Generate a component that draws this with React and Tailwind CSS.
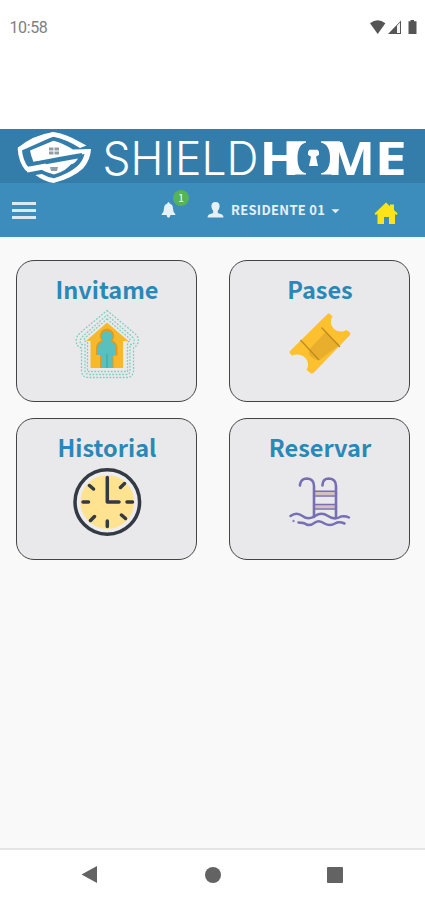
import React from "react";

function StatusBar() {
  return (
    <div className="flex h-[129px] items-start justify-between bg-white pl-[9.500px] pr-[5px] pt-[18px]">
      <span className="font-['Roboto',sans-serif] text-[16px] leading-[20px] tracking-[-0.4px] text-[#808080]">10:58</span>
      <svg className="h-[20px] w-[52px]" viewBox="368 18 52 20" fill="#555555">
        <path d="M370 23.300Q377.700 17.400 385.400 23.300L377.700 34Z" />
        <path d="M388 34L401 20.500V34Z" />
        <path d="M397 25.600L400 22.500V33H397Z" fill="#f5f5f5" />
        <path d="M410.500 20h3.500v1.300h2.500V34h-8V21.300h2Z" />
      </svg>
    </div>
  );
}

function Logo() {
  return (
    <div className="h-[54px] bg-[#347dab]">
      <svg className="block h-[54px] w-[425px] overflow-visible" viewBox="0 129 425 54" fill="#ffffff">
        <path d="M53.500 134L19.800 149Q20.500 161 27 169L46 165.500" fill="none" stroke="#ffffff" strokeWidth="4.200" strokeLinejoin="round" />
        <path d="M53.500 132Q66 134 78 141L86.500 145.500L80 148Q67 139.500 53.500 136.700Q36 140.500 22.500 149.500L17.500 148Q33 135 53.500 132Z" />
        <path d="M30 150.500L53.500 140.700Q64 143.500 73 149.500L91 149Q90.500 160 83 168.500Q72 178.500 53.500 183Q44 181.500 35.500 175L42 174Q48 177.500 54 178.300Q68 174 77 166.500Q83 161 84.500 154L33.500 162Q31 156 30 150.500Z" />
        <path d="M25 168L78 158.500Q75 164 70 164.500L27.500 172.500Z" />
        <path d="M40 169L73 161.500Q67 171 54 174.500Q47 173 40 169Z" />
        <path d="M29 164.300L62 158Q72 156 82 154.500" fill="none" stroke="#347dab" strokeWidth="3.200" />
        <path d="M49 147.500h4.500v3H49zm5.500 0H59v3h-4.500zM49 151.500h4.500v3H49zm5.500 0H59v3h-4.500zM50 167h8L57 171h-6Z" fill="#929da5" />
        <text x="102.500" y="174.500" fontFamily="Inter, sans-serif" fontWeight="300" fontSize="46" textLength="156" lengthAdjust="spacingAndGlyphs">SHIELD</text>
        <text x="259.500" y="174.500" fontFamily="Open Sans, sans-serif" fontWeight="700" fontSize="46" textLength="40.500" lengthAdjust="spacingAndGlyphs">H</text>
        <path d="M286.500 141.200H306V142.500Q297.500 144.500 297.500 158Q297.500 171.500 306 173.300V174.500H286.500Z" />
        <path d="M340 141.200H321V142.500Q330 144.500 330 158Q330 171.500 321 173.300V174.500H338Z" />
        <path d="M309.500 149.700h8l1.500 2v3l-3 2L318 166h-9l2-9.300l-3-2v-3Z" />
        <text x="327" y="174.500" fontFamily="Open Sans, sans-serif" fontWeight="700" fontSize="46" textLength="48" lengthAdjust="spacingAndGlyphs">M</text>
        <text x="374.500" y="174.500" fontFamily="Open Sans, sans-serif" fontWeight="700" fontSize="46" textLength="32.500" lengthAdjust="spacingAndGlyphs">E</text>
      </svg>
    </div>
  );
}

function NavBar() {
  return (
    <div className="flex h-[54px] items-center bg-[#3c8dbc] text-[#e6f0f7]">
      <div className="ml-[12px] mt-[1px] flex w-[24px] flex-col gap-[4px]">
        <div className="h-[3px] bg-[#dce9f2]" />
        <div className="h-[3px] bg-[#dce9f2]" />
        <div className="h-[3px] bg-[#dce9f2]" />
      </div>
      <div className="relative ml-[125px] h-[16px] w-[15px]">
        <svg className="block h-[16px] w-[15px]" viewBox="0 0 15 16" fill="currentColor">
          <path d="M7.500 0Q8.500 0 8.600 1.500Q12 2.500 12 6.500Q12 10 14.300 12V13H.7V12Q3 10 3 6.500Q3 2.500 6.400 1.500Q6.500 0 7.500 0ZM5.500 13h4Q9 15.800 7.500 15.800T5.500 13Z" />
        </svg>
        <span className="absolute left-[12px] top-[-12px] flex h-[16px] w-[16px] items-center justify-center rounded-full bg-[#55b457] font-['Noto_Sans_CJK_SC',sans-serif] text-[10px] leading-none text-white">1</span>
      </div>
      <svg className="ml-[31px] block h-[16px] w-[17px]" viewBox="0 0 17 16" fill="currentColor">
        <path d="M8.500 0C11.500 0 12.800 2 12.600 4.500Q12.300 7.500 10.800 8.800V11L15 12.500Q16.500 13.300 16.500 15.500H.5Q.5 13.300 2 12.500L6.200 11V8.800Q4.700 7.500 4.400 4.500C4.200 2 5.500 0 8.500 0Z" />
      </svg>
      <span className="ml-[7px] w-[96px] whitespace-nowrap font-['Noto_Sans_CJK_SC',sans-serif] text-[13px] font-bold leading-[18px] tracking-[0.300px]">RESIDENTE 01</span>
      <svg className="ml-[4px] mt-[2px] h-[5px] w-[9px]" viewBox="0 0 9 5" fill="currentColor"><path d="M.5 .3h8L4.500 4.300Z" /></svg>
      <svg className="ml-[34px] mt-[6px] h-[23px] w-[24px]" viewBox="0 0 24 23" fill="#ffe31a">
        <path d="M12 .5L16 4.300V2.500H20V8L23.700 11.500L22.500 13L21 12V22H15V15H10V22H3.500V12L1.700 13L.5 11.500Z" />
      </svg>
    </div>
  );
}

function InviteIcon() {
  return (
    <svg className="block h-[80px] w-[80px]" viewBox="67 304 80 80">
      <g fill="none" stroke="#7fcdbd" strokeWidth="1.300" strokeDasharray="1.800 1.500" strokeLinejoin="round">
        <path d="M107 310.500L136.500 335Q140 340 137 345L133.500 348V372Q132 377.500 127 377.500H88Q82 377 81.500 371V348Q75 346 76.500 338Q77 336 80 333Z" />
        <path d="M107 315L132 336.500Q136 341 133 344.500H130V371Q130 374.500 126 374.500H89Q85 374 85 371V344.500H81Q79 341 82 337Z" />
        <path d="M107 319L129 338Q132 341 127.500 342V371.500H87.500V342Q82 341 85 338Z" />
      </g>
      <path d="M107 322.500L128.500 341H123V368H90.500V341H86Z" fill="#f5b92b" />
      <path d="M107 328.500a7.500 7.500 0 0 1 5.500 12q4.500 2 5 7v8h-4v12.500H100V355h-4v-8q1-5 5.500-6.500A7.500 7.500 0 0 1 107 328.500Z" fill="#e3981e" />
      <circle cx="107" cy="336.500" r="5.700" fill="#58c1bd" />
      <path d="M102 342h10q4 1 4 5v8h-3.500v13H101.500V355H98v-8q0-4 4-5Z" fill="#58c1bd" />
      <path d="M106.500 354h1v14h-1Z" fill="#3aa3a3" />
    </svg>
  );
}

function TicketIcon() {
  return (
    <svg className="block h-[80px] w-[80px]" viewBox="280 304.500 80 80">
      <path d="M327 315Q328.500 313.500 330 314.500L332.500 317Q328.500 323 334 329.500Q340 334 346.500 330.500L350 333Q351 334 350 335.500L314 373Q312 375 310.500 373.500L306.500 370.500Q310 364 305.500 358.500Q300 353 292 356L290 354Q289 352.500 290 351.500Z" fill="#fdc12f" />
      <path d="M326 332L339.500 345.500L319 361Q304 357 311 348Z" fill="#e9ae2c" />
      <path d="M300.500 340.500L319 360.500M321.500 328L340 347.500" stroke="#bd8b22" strokeWidth="1.300" />
    </svg>
  );
}

function ClockIcon() {
  return (
    <svg className="block h-[80px] w-[80px]" viewBox="67 462 80 80">
      <circle cx="107.300" cy="502" r="32.300" fill="#ededf0" stroke="#343a43" strokeWidth="3.500" />
      <circle cx="107.300" cy="502" r="27" fill="#ffe391" />
      <path d="M107.300 477.500V502H119M127 502h5.500M83 502h5.500M107.300 521v5.500M89.500 485.500l4 3.500M124.500 483.500l-4 4M121.500 515l4 3.500M94.500 516.500l-4 4" fill="none" stroke="#343a43" strokeWidth="3.500" strokeLinecap="round" strokeLinejoin="round" />
    </svg>
  );
}

function PoolIcon() {
  return (
    <svg className="block h-[80px] w-[80px]" viewBox="280 462 80 80" fill="none" strokeLinecap="round">
      <path d="M315 493.500H336M315 506.500H336" stroke="#d7bfc1" strokeWidth="3" />
      <path d="M315 491.300H335M315 496H335M315 504.500H335M315 509H335" stroke="#776eb4" strokeWidth="1.600" />
      <path d="M300 485.500V484.500Q301 478.500 307 478.500Q314 479 314 486V517M322.500 485.500V484.500Q323 478.500 329 478.500Q336 479 336 486V516" stroke="#776eb4" strokeWidth="2.600" />
      <path d="M290.500 516Q296.500 511.500 302.500 516T315 516T328 516T341 516.500Q345 515.500 349 517.500M298.500 522.500Q304 522.500 306.500 524.500Q310.500 526 315 522.500Q319 519.500 324.500 523.500Q330 526.500 335 523.500Q339 521 344.500 523.500" stroke="#776eb4" strokeWidth="2.500" />
      <circle cx="293.500" cy="521" r="1.200" fill="#8b83bd" />
    </svg>
  );
}

const tiles = [
  { title: "Invitame", Icon: InviteIcon },
  { title: "Pases", Icon: TicketIcon },
  { title: "Historial", Icon: ClockIcon },
  { title: "Reservar", Icon: PoolIcon },
];

export default function App() {
  return (
    <div className="flex h-[900px] w-[425px] flex-col overflow-hidden bg-[#f9f9f9]">
      <StatusBar />
      <Logo />
      <NavBar />
      <main className="grid flex-1 grid-cols-[181px_181px] content-start gap-x-[32px] gap-y-[16px] pl-[16px] pt-[23px]">
        {tiles.map(({ title, Icon }) => (
          <button key={title} className="flex h-[142px] flex-col items-center rounded-[18px] border border-[#444444] bg-[#e9e9eb] pt-[13px]">
            <span className="pl-[1px] font-['Noto_Sans_CJK_SC',sans-serif] text-[23.500px] font-bold leading-[30px] text-[#2a88b8]">{title}</span>
            <Icon />
          </button>
        ))}
      </main>
      <footer className="flex h-[52px] items-center border-t-2 border-[#e4e4e4] bg-white">
        <svg className="ml-[81px] h-[18px] w-[17px]" viewBox="0 0 17 18"><path d="M.5 8.500L16 0V17Z" fill="#636363" /></svg>
        <div className="mb-[1px] ml-[107px] h-[16px] w-[16px] rounded-full bg-[#636363]" />
        <div className="mb-[1px] ml-[106px] h-[16px] w-[16px] rounded-[1px] bg-[#636363]" />
      </footer>
    </div>
  );
}
